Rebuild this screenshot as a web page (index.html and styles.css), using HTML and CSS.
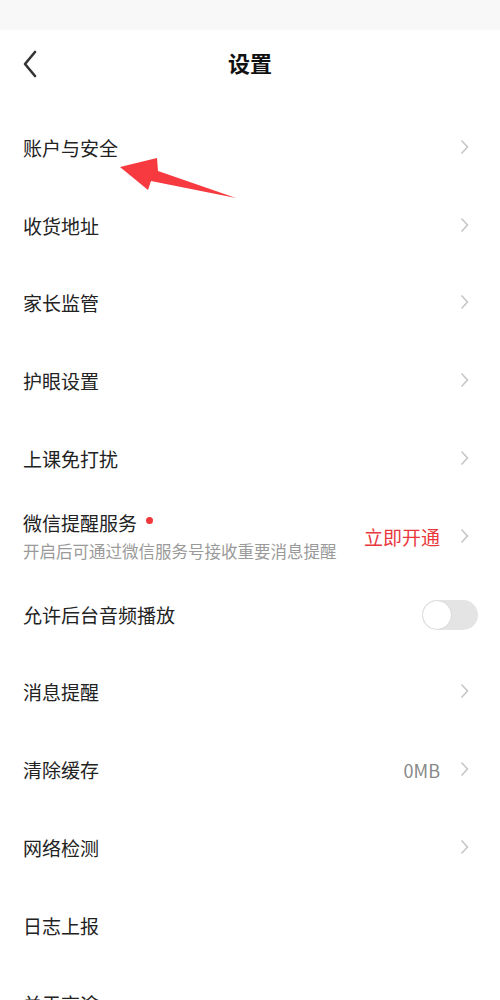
FILE: index.html
```html
<!DOCTYPE html>
<html lang="zh-CN">
<head>
  <meta charset="UTF-8">
  <meta name="viewport" content="width=device-width, initial-scale=1.0">
  <title>设置</title>
  <link rel="stylesheet" href="styles.css">
</head>
<body>
  <div class="status-bar"></div>
  <div class="header">
    <svg class="back" width="16" height="28" viewBox="0 0 16 28"><path d="M13 2 L3 14 L13 26" fill="none" stroke="#333" stroke-width="2.6" stroke-linecap="round" stroke-linejoin="round"/></svg>
    <h1>设置</h1>
  </div>

  <div class="list">
    <div class="row">
      <span class="label">账户与安全</span>
      <svg class="chev" width="9" height="16" viewBox="0 0 9 16"><path d="M1.5 1.5 L7.5 8 L1.5 14.5" fill="none" stroke="#c6c6c6" stroke-width="1.6"/></svg>
    </div>
    <div class="row">
      <span class="label">收货地址</span>
      <svg class="chev" width="9" height="16" viewBox="0 0 9 16"><path d="M1.5 1.5 L7.5 8 L1.5 14.5" fill="none" stroke="#c6c6c6" stroke-width="1.6"/></svg>
    </div>
    <div class="row">
      <span class="label">家长监管</span>
      <svg class="chev" width="9" height="16" viewBox="0 0 9 16"><path d="M1.5 1.5 L7.5 8 L1.5 14.5" fill="none" stroke="#c6c6c6" stroke-width="1.6"/></svg>
    </div>
    <div class="row">
      <span class="label">护眼设置</span>
      <svg class="chev" width="9" height="16" viewBox="0 0 9 16"><path d="M1.5 1.5 L7.5 8 L1.5 14.5" fill="none" stroke="#c6c6c6" stroke-width="1.6"/></svg>
    </div>
    <div class="row">
      <span class="label">上课免打扰</span>
      <svg class="chev" width="9" height="16" viewBox="0 0 9 16"><path d="M1.5 1.5 L7.5 8 L1.5 14.5" fill="none" stroke="#c6c6c6" stroke-width="1.6"/></svg>
    </div>
    <div class="row">
      <div class="text-block">
        <span class="label">微信提醒服务<i class="dot"></i></span>
        <span class="sub">开启后可通过微信服务号接收重要消息提醒</span>
      </div>
      <span class="action">立即开通</span>
      <svg class="chev" width="9" height="16" viewBox="0 0 9 16"><path d="M1.5 1.5 L7.5 8 L1.5 14.5" fill="none" stroke="#c6c6c6" stroke-width="1.6"/></svg>
    </div>
    <div class="row">
      <span class="label">允许后台音频播放</span>
      <div class="toggle"><div class="knob"></div></div>
    </div>
    <div class="row">
      <span class="label">消息提醒</span>
      <svg class="chev" width="9" height="16" viewBox="0 0 9 16"><path d="M1.5 1.5 L7.5 8 L1.5 14.5" fill="none" stroke="#c6c6c6" stroke-width="1.6"/></svg>
    </div>
    <div class="row">
      <span class="label">清除缓存</span>
      <span class="value">0MB</span>
      <svg class="chev" width="9" height="16" viewBox="0 0 9 16"><path d="M1.5 1.5 L7.5 8 L1.5 14.5" fill="none" stroke="#c6c6c6" stroke-width="1.6"/></svg>
    </div>
    <div class="row">
      <span class="label">网络检测</span>
      <svg class="chev" width="9" height="16" viewBox="0 0 9 16"><path d="M1.5 1.5 L7.5 8 L1.5 14.5" fill="none" stroke="#c6c6c6" stroke-width="1.6"/></svg>
    </div>
    <div class="row">
      <span class="label">日志上报</span>
    </div>
    <div class="row">
      <span class="label">关于高途</span>
    </div>
  </div>

  <!-- annotation arrow -->
  <svg class="pointer" width="500" height="1000" viewBox="0 0 500 1000">
    <polygon points="120,167 157,158 158,171 236,198 151,181 148,190" fill="#f63a3f"/>
  </svg>
</body>
</html>
```

FILE: styles.css
```css
body {
  margin: 0;
  width: 500px;
  height: 1000px;
  overflow: hidden;
  background: #fff;
  font-family: "Noto Sans CJK SC", "Noto Sans", sans-serif;
  color: #222;
  position: relative;
}
.status-bar {
  height: 30px;
  background: #f8f8f8;
}
.header {
  height: 70px;
  display: flex;
  align-items: center;
  justify-content: center;
  position: relative;
}
.header h1 {
  margin: 0;
  font-size: 22px;
  font-weight: 700;
  color: #111;
  margin-top: -6px;
}
.back {
  position: absolute;
  left: 22px;
  top: 20px;
}
.list {
  padding-top: 9px;
}
.row {
  height: 77.8px;
  display: flex;
  align-items: center;
  padding: 0 31px 0 23px;
}
.label {
  font-size: 19px;
  line-height: 26px;
  color: #222;
  flex: 1;
  display: flex;
  align-items: center;
}
.text-block {
  flex: 1;
  display: flex;
  flex-direction: column;
}
.text-block .label {
  flex: none;
}
.sub {
  font-size: 16.5px;
  line-height: 24px;
  color: #9a9a9a;
  margin-top: 3px;
}
.dot {
  width: 7px;
  height: 7px;
  border-radius: 50%;
  background: #f0383b;
  margin-left: 9px;
  margin-top: -6px;
}
.action {
  font-size: 19px;
  color: #e8383d;
  margin-right: 20px;
}
.value {
  font-size: 18px;
  color: #888;
  margin-right: 20px;
}
.chev {
  flex: none;
  margin-top: -2px;
}
.toggle {
  width: 56px;
  height: 30px;
  border-radius: 15px;
  background: #e4e4e4;
  margin-right: -9px;
  position: relative;
}
.knob {
  position: absolute;
  left: 1px;
  top: 1px;
  width: 28px;
  height: 28px;
  border-radius: 50%;
  background: #fff;
  box-shadow: 0 0 1px rgba(0, 0, 0, 0.25);
}
.pointer {
  position: absolute;
  left: 0;
  top: 0;
  pointer-events: none;
}
```
